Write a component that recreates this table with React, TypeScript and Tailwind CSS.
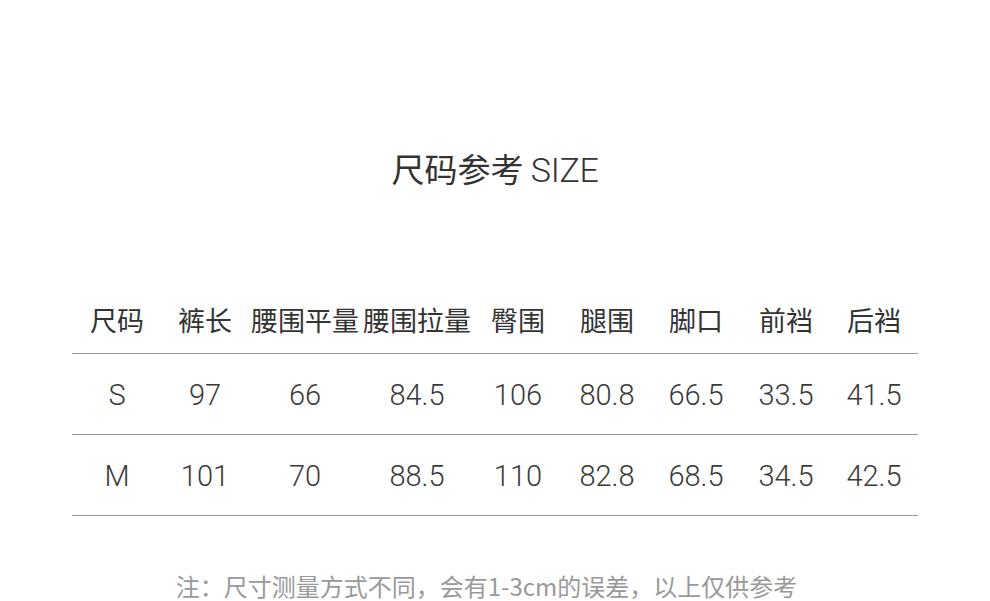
import React from "react";

const headers = ["尺码", "裤长", "腰围平量", "腰围拉量", "臀围", "腿围", "脚口", "前裆", "后裆"];
const rows = [
  ["S", "97", "66", "84.5", "106", "80.8", "66.5", "33.5", "41.5"],
  ["M", "101", "70", "88.5", "110", "82.8", "68.5", "34.5", "42.5"],
];
const cols = "grid grid-cols-[90px_86px_114px_110px_92px_86px_92px_88px_88px]";

export default function App() {
  return (
    <div className="w-[990px] h-[601px] bg-white overflow-hidden flex flex-col items-center text-[#333] font-['Noto_Sans_CJK_SC',sans-serif]">
      <div className="mt-[146px] h-[44px] text-[33px] leading-[44px] text-[#333] whitespace-nowrap">
        <span>尺码参考</span>{" "}
        <span className="font-['Roboto',sans-serif] font-light tracking-[-0.3px] text-[34px]">SIZE</span>
      </div>
      <div className="mt-[108px] w-[846px]">
        <div className={`${cols} h-[56px] pb-[13px] items-center border-b border-[#999]`}>
          {headers.map((h) => (
            <div key={h} className="text-center text-[27px] leading-none whitespace-nowrap">
              {h}
            </div>
          ))}
        </div>
        {rows.map((r) => (
          <div key={r[0]} className={`${cols} h-[81px] items-center border-b border-[#999]`}>
            {r.map((c, i) => (
              <div
                key={i}
                className="text-center text-[29px] leading-none text-[#3a3a3a] font-['Roboto',sans-serif] font-light pt-[2px]"
              >
                {c}
              </div>
            ))}
          </div>
        ))}
      </div>
      <div className="mt-[58px] mr-[17px] text-[24px] leading-none text-[#999] whitespace-nowrap">
        注：尺寸测量方式不同，会有1-3cm的误差，以上仅供参考
      </div>
    </div>
  );
}
